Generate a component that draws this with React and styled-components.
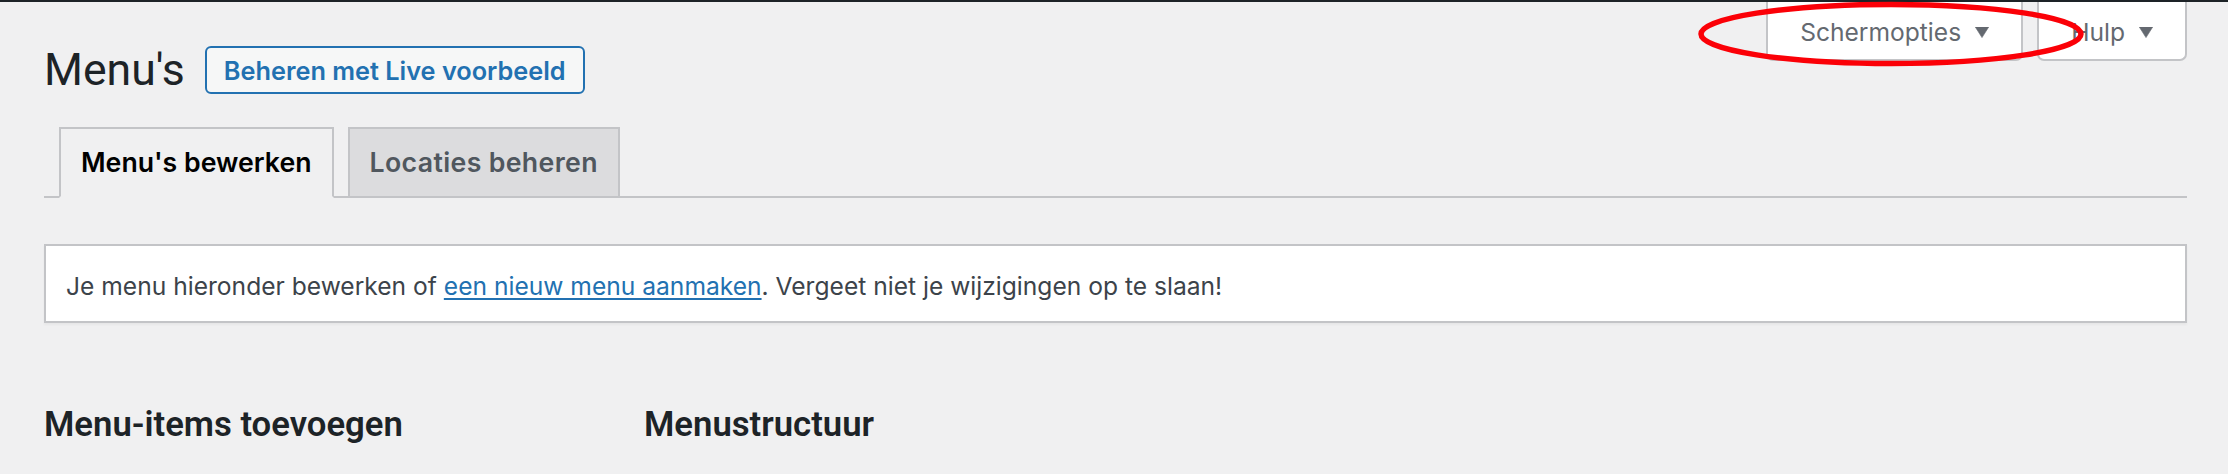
import React from 'react';
import styled, { createGlobalStyle } from 'styled-components';

const GlobalStyle = createGlobalStyle`
  * { box-sizing: border-box; }
  body {
    margin: 0;
    background: #f0f0f1;
    color: #3c434a;
    font-family: Inter, "Liberation Sans", sans-serif;
  }
`;

const AdminBar = styled.div`
  height: 2px;
  background: #1d2327;
`;

const Wrap = styled.div`
  padding: 0 41px 0 44px;
`;

const Header = styled.div`
  display: flex;
  justify-content: space-between;
  align-items: flex-start;
`;

const TitleRow = styled.div`
  display: flex;
  align-items: center;
  gap: 20px;
  padding-top: 44px;
`;

const Title = styled.h1`
  margin: 0;
  font-family: Roboto, "Liberation Sans", sans-serif;
  font-weight: 400;
  font-size: 44.6px;
  line-height: 48px;
  color: #1d2327;
`;

const LiveButton = styled.a`
  display: inline-flex;
  align-items: center;
  height: 48px;
  padding: 0 17px;
  border: 2px solid #2271b1;
  border-radius: 6px;
  background: #f6f7f7;
  color: #2271b1;
  font-size: 25.3px;
  font-weight: 600;
  text-decoration: none;
  white-space: nowrap;
`;

const ScreenMeta = styled.div`
  position: relative;
  display: flex;
  gap: 14px;
`;

const MetaTab = styled.button`
  display: flex;
  align-items: center;
  gap: 14px;
  height: 59px;
  padding: 3px 32px 0;
  background: #fff;
  border: 2px solid #c3c4c7;
  border-top: 0;
  border-radius: 0 0 7px 7px;
  font-family: inherit;
  font-size: 24.6px;
  color: #646970;
  cursor: pointer;

  svg {
    flex-shrink: 0;
  }
`;

const Annotation = styled.svg`
  position: absolute;
  left: -75px;
  top: -2px;
  width: 400px;
  height: 70px;
  overflow: visible;
  pointer-events: none;
`;

const NavTabs = styled.nav`
  display: flex;
  margin-top: 33px;
  padding-left: 15px;
  border-bottom: 2px solid #c3c4c7;
`;

const Tab = styled.a`
  display: block;
  margin-bottom: -2px;
  padding: 10px 20px;
  line-height: 47px;
  border: 2px solid #c3c4c7;
  border-bottom-color: ${(p) => (p.$active ? '#f0f0f1' : '#c3c4c7')};
  background: ${(p) => (p.$active ? '#f0f0f1' : '#dcdcde')};
  color: ${(p) => (p.$active ? '#000' : '#50575e')};
  font-size: 26.7px;
  font-weight: 600;
  letter-spacing: ${(p) => (p.$active ? '0' : '0.35px')};
  text-decoration: none;
  white-space: nowrap;

  & + & {
    margin-left: 14px;
  }
`;

const Notice = styled.div`
  margin-top: 46px;
  padding: 22px 20px 17px;
  background: #fff;
  border: 2px solid #c3c4c7;
  box-shadow: 0 2px 2px rgba(0, 0, 0, 0.04);
  font-size: 24.6px;
  line-height: 36px;
  color: #3c434a;
`;

const Link = styled.a`
  color: #2271b1;
  text-decoration: underline;
  text-decoration-thickness: 2px;
  text-underline-offset: 3px;
`;

const Columns = styled.div`
  display: grid;
  grid-template-columns: 600px 1fr;
  margin-top: 79px;
`;

const SectionTitle = styled.h2`
  margin: 0;
  font-family: Roboto, "Liberation Sans", sans-serif;
  font-weight: 600;
  font-size: 34.7px;
  line-height: 44px;
  color: #1d2327;
`;

// dashicons-arrow-down: filled triangle with softened corners
const Arrow = () => (
  <svg width="14" height="11" viewBox="0 0 14 11" aria-hidden="true">
    <path
      d="M0.3 0h13.4L7 10.6z"
      fill="#646970"
      stroke="#646970"
      strokeWidth="0.6"
      strokeLinejoin="round"
    />
  </svg>
);

export default function App() {
  return (
    <>
      <GlobalStyle />
      <AdminBar />
      <Wrap>
        <Header>
          <TitleRow>
            <Title>Menu's</Title>
            <LiveButton href="#">Beheren met Live voorbeeld</LiveButton>
          </TitleRow>
          <ScreenMeta>
            <MetaTab>
              Schermopties <Arrow />
            </MetaTab>
            <MetaTab>
              Hulp <Arrow />
            </MetaTab>
            <Annotation viewBox="0 0 400 70">
              <ellipse cx="200" cy="34" rx="190" ry="29.5" fill="none" stroke="#fb0007" strokeWidth="5.5" />
            </Annotation>
          </ScreenMeta>
        </Header>

        <NavTabs>
          <Tab href="#" $active>Menu's bewerken</Tab>
          <Tab href="#">Locaties beheren</Tab>
        </NavTabs>

        <Notice>
          Je menu hieronder bewerken of <Link href="#">een nieuw menu aanmaken</Link>. Vergeet niet je wijzigingen op te slaan!
        </Notice>

        <Columns>
          <SectionTitle>Menu-items toevoegen</SectionTitle>
          <SectionTitle>Menustructuur</SectionTitle>
        </Columns>
      </Wrap>
    </>
  );
}
